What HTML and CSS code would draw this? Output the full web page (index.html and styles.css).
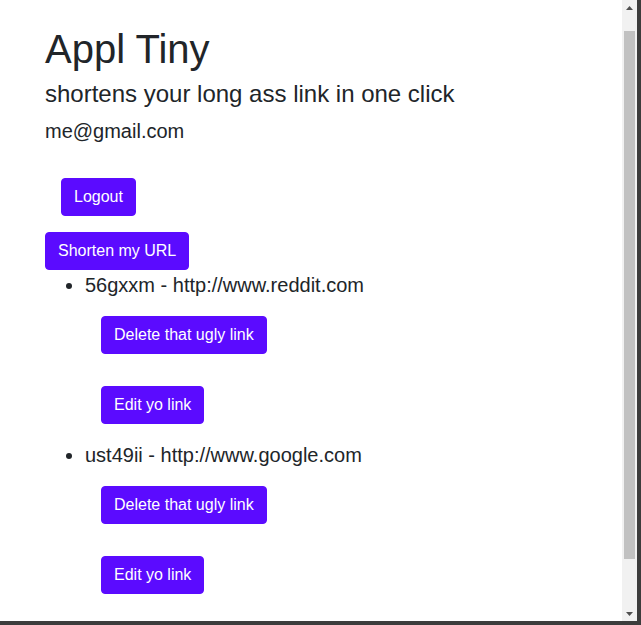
FILE: index.html
```html
<!DOCTYPE html>
<html lang="en">
<head>
<meta charset="utf-8">
<title>Appl Tiny</title>
<link rel="stylesheet" href="styles.css">
</head>
<body>
<div class="frame">
  <div class="viewport">
    <main class="page">
      <h1 class="title">Appl Tiny</h1>
      <h2 class="tagline">shortens your long ass link in one click</h2>
      <p class="email">me@gmail.com</p>
      <div class="logout-row"><button class="btn" type="button">Logout</button></div>
      <form class="shorten-form"><button class="btn" type="button">Shorten my URL</button></form>
      <ul class="links">
        <li class="link-item">
          <span class="link-text">56gxxm - http://www.reddit.com</span>
          <div class="actions">
            <form class="action"><button class="btn" type="button">Delete that ugly link</button></form>
            <form class="action"><button class="btn" type="button">Edit yo link</button></form>
          </div>
        </li>
        <li class="link-item">
          <span class="link-text">ust49ii - http://www.google.com</span>
          <div class="actions">
            <form class="action"><button class="btn" type="button">Delete that ugly link</button></form>
            <form class="action"><button class="btn" type="button">Edit yo link</button></form>
          </div>
        </li>
      </ul>
    </main>
  </div>
  <div class="scrollbar">
    <div class="sb-btn"><svg width="7" height="4" viewBox="0 0 7 4"><path d="M3.5 0 L7 4 L0 4 Z" fill="#505050"/></svg></div>
    <div class="sb-track"><div class="sb-thumb"></div></div>
    <div class="sb-btn"><svg width="7" height="4" viewBox="0 0 7 4"><path d="M0 0 L7 0 L3.5 4 Z" fill="#505050"/></svg></div>
  </div>
</div>
</body>
</html>
```
FILE: styles.css
```css
html, body {
  margin: 0;
  padding: 0;
}
body {
  width: 641px;
  height: 625px;
  overflow: hidden;
  font-family: "Liberation Sans", Arial, sans-serif;
  color: #212529;
}
.frame {
  width: 641px;
  height: 625px;
  box-sizing: border-box;
  padding: 0 4px 4px 0;
  background: #3c3c3c;
  display: flex;
}
.viewport {
  flex: 1;
  background: #ffffff;
  overflow: hidden;
}
.page {
  padding: 25px 0 0 45px;
}
.title {
  margin: 0;
  font-size: 40px;
  line-height: 48px;
  font-weight: 400;
}
.tagline {
  margin: 6px 0 0;
  font-size: 24px;
  line-height: 29px;
  font-weight: 400;
}
.email {
  margin: 11px 0 0;
  font-size: 20px;
  line-height: 24px;
}
.logout-row {
  margin: 35px 0 0 16px;
}
.shorten-form {
  margin: 16px 0 0;
}
.btn {
  display: inline-block;
  box-sizing: border-box;
  height: 38px;
  padding: 6px 12px;
  border: 1px solid #5b0bff;
  border-radius: 4px;
  background: #5b0bff;
  color: #ffffff;
  font-family: "Liberation Sans", Arial, sans-serif;
  font-size: 16px;
  line-height: 24px;
  cursor: pointer;
}
.links {
  margin: 3px 0 0;
  padding-left: 40px;
}
.link-item {
  font-size: 20px;
  line-height: 24px;
  padding-bottom: 19px;
}
.link-text {
  display: block;
}
.actions {
  display: flex;
  flex-direction: column;
  align-items: flex-start;
  gap: 32px;
  margin: 19px 0 0 16px;
}
.action {
  margin: 0;
}
.scrollbar {
  width: 15px;
  background: #f1f1f1;
  display: flex;
  flex-direction: column;
}
.sb-btn {
  height: 15px;
  display: flex;
  align-items: center;
  justify-content: center;
}
.sb-track {
  flex: 1;
  padding: 16px 2px 0;
}
.sb-thumb {
  height: 528px;
  background: #c1c1c1;
}
```
